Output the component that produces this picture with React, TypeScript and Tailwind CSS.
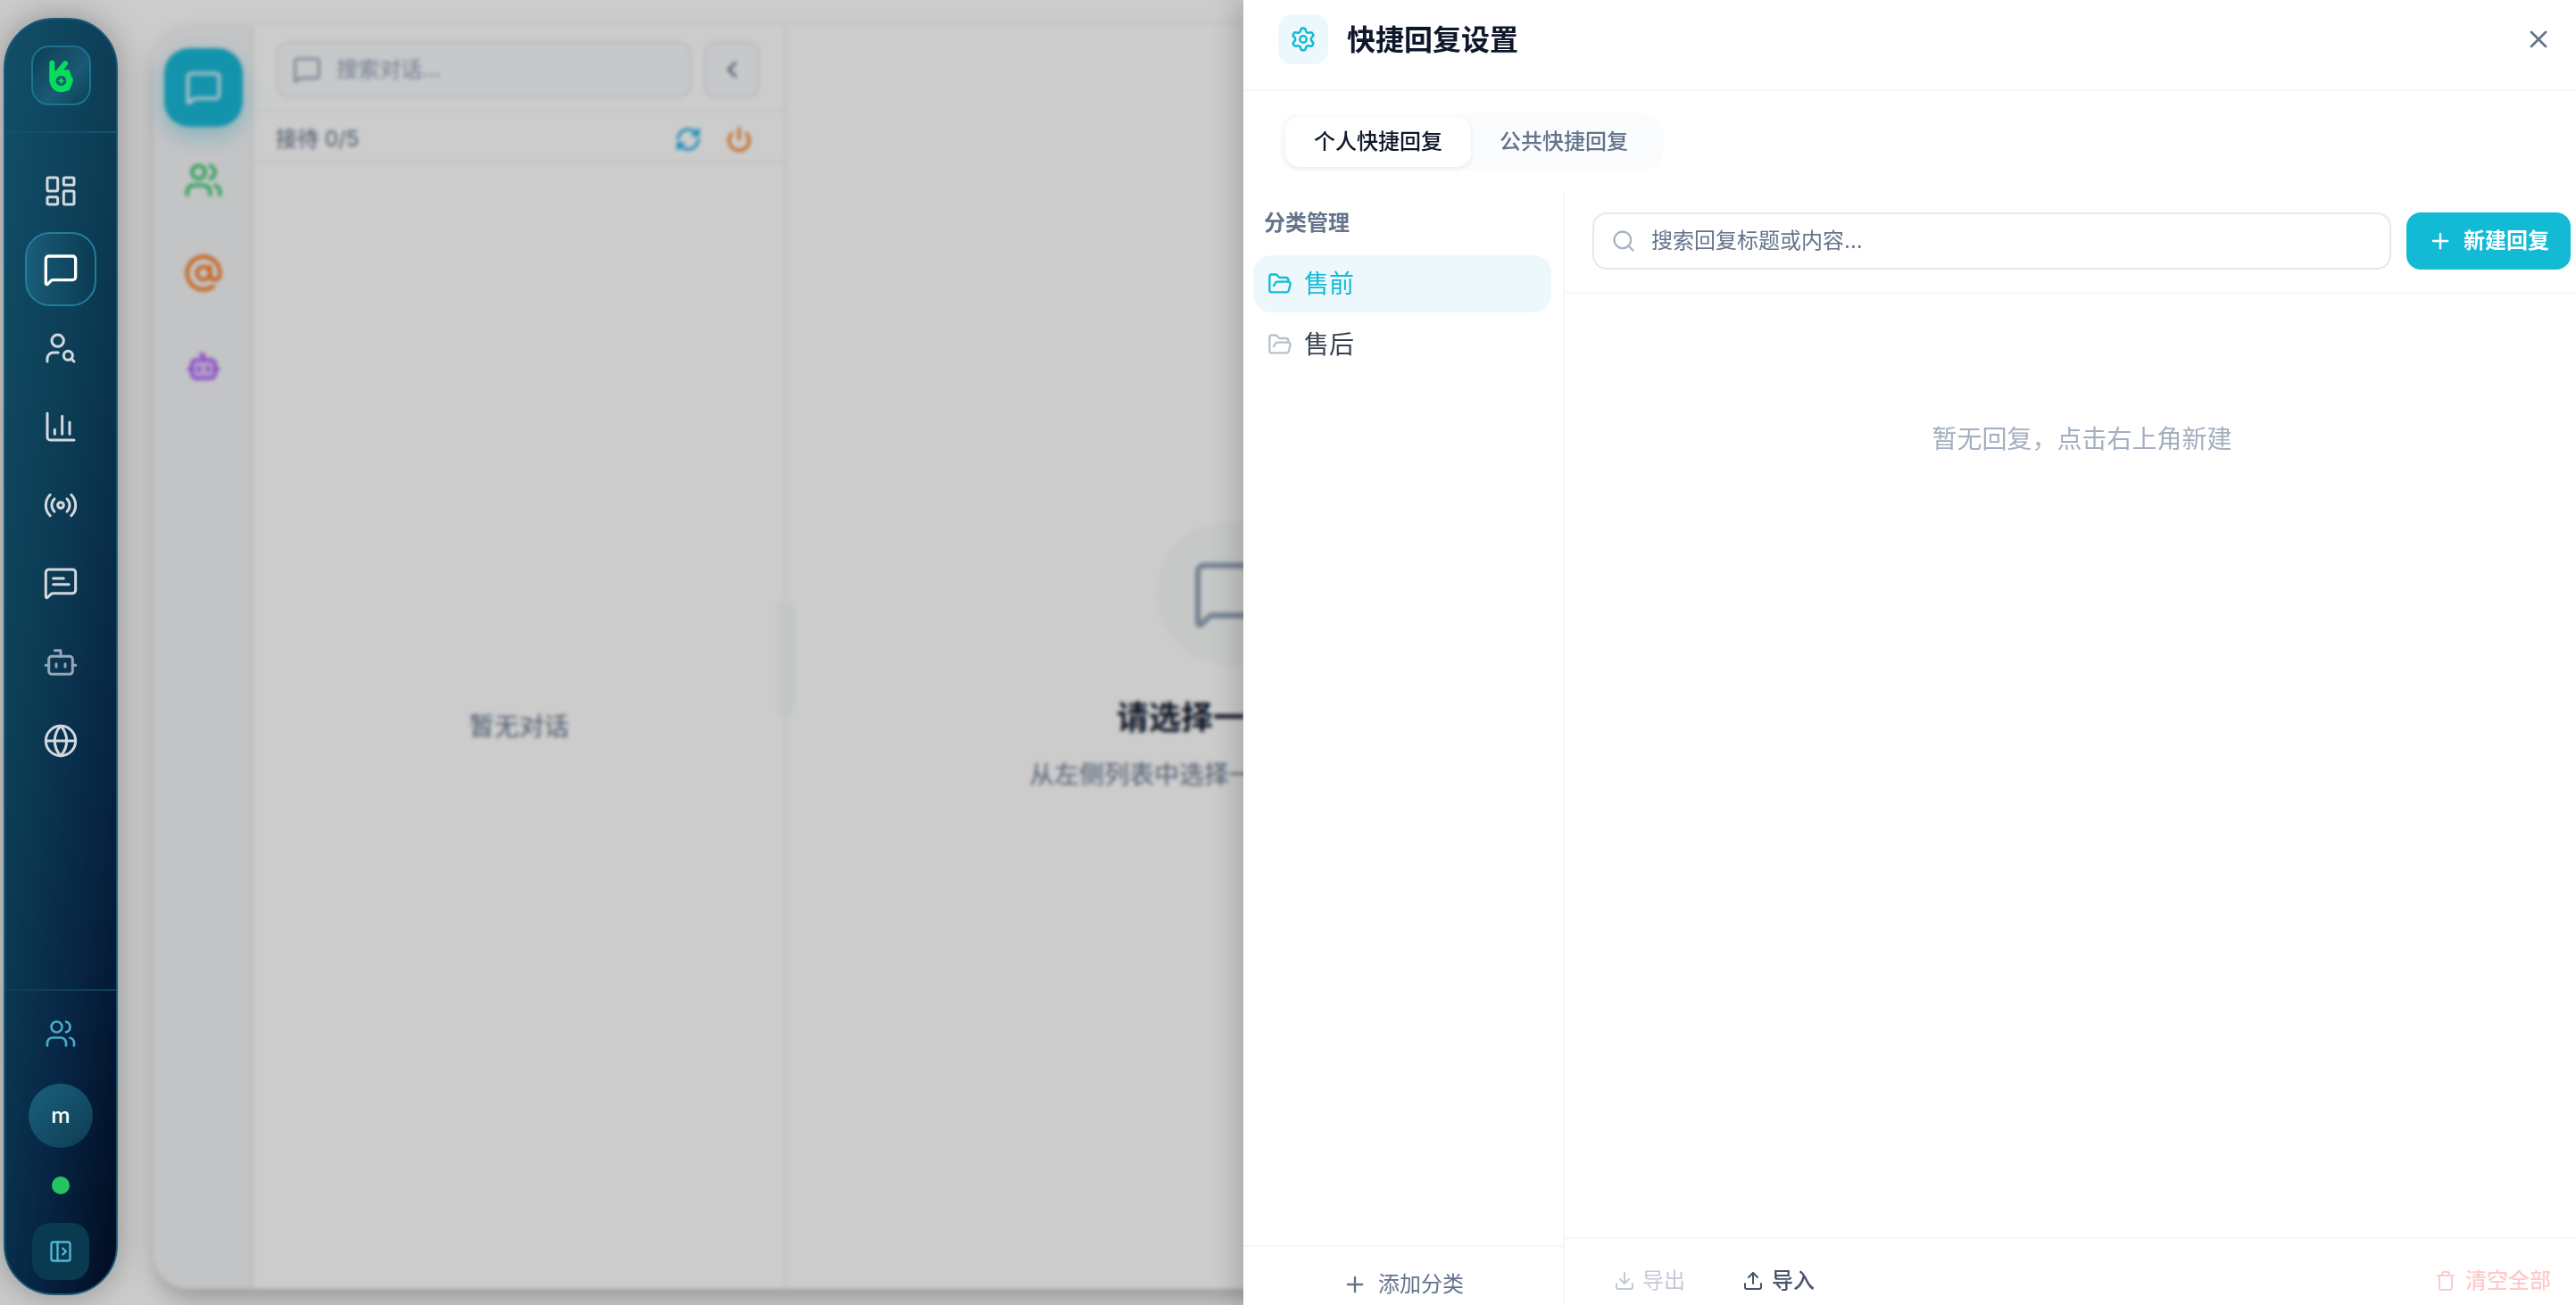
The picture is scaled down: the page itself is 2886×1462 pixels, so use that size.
import {
  AtSign,
  ChartColumn,
  ChevronLeft,
  Download,
  FolderOpen,
  Globe,
  LayoutDashboard,
  MessageSquare,
  PanelLeftOpen,
  Plus,
  Power,
  Radio,
  RefreshCw,
  Search,
  Settings,
  Trash,
  Upload,
  UserSearch,
  Users,
  X,
  Bot,
} from 'lucide-react';

function Logo() {
  return (
    <svg width="67" height="67" viewBox="4 2.5 68 68" fill="none">
      <circle cx="38" cy="43" r="10" stroke="#05dd5b" strokeWidth="7.5" />
      <path d="M27 21.5V43" stroke="#05dd5b" strokeWidth="6.5" strokeLinecap="round" />
      <path d="M43 22L34 33" stroke="#05dd5b" strokeWidth="6.5" strokeLinecap="round" />
      <circle cx="45" cy="33.5" r="4" fill="#05dd5b" />
      <circle cx="48.5" cy="42.5" r="4" fill="#05dd5b" />
      <circle cx="45" cy="51" r="4" fill="#05dd5b" />
      <path
        d="M38 38Q38.7 42.3 43 43Q38.7 43.7 38 48Q37.3 43.7 33 43Q37.3 42.3 38 38Z"
        fill="#05dd5b"
      />
    </svg>
  );
}

function ChatLines() {
  return (
    <svg
      width="40"
      height="40"
      viewBox="0 0 24 24"
      fill="none"
      stroke="currentColor"
      strokeWidth="1.8"
      strokeLinecap="round"
      strokeLinejoin="round"
      className="-mt-[2px]"
    >
      <path d="M22 17a2 2 0 0 1-2 2H6.828a2 2 0 0 0-1.414.586l-2.202 2.202A.71.71 0 0 1 2 21.286V5a2 2 0 0 1 2-2h16a2 2 0 0 1 2 2z" />
      <path d="M7 9h7" />
      <path d="M7 13h10.5" />
    </svg>
  );
}

function PurpleBot() {
  return (
    <svg width="42" height="42" viewBox="0 0 24 24" fill="none" strokeLinecap="round" strokeLinejoin="round">
      <path d="M12 8V4.5H10" stroke="#a855f7" strokeWidth="2" />
      <rect x="4.5" y="8" width="15" height="12" rx="3" fill="#ddc4fb" stroke="#a855f7" strokeWidth="2" />
      <path d="M2.5 14h2M19.5 14h2" stroke="#a855f7" strokeWidth="2" />
      <path d="M9 13v2M15 13v2" stroke="#a855f7" strokeWidth="2" />
    </svg>
  );
}

function Sidebar() {
  return (
    <aside className="relative z-20 ml-1 mt-5 flex h-[1431px] w-[128px] shrink-0 flex-col rounded-[56px] border-2 border-[#1b5b78] bg-[linear-gradient(98deg,#124f69_0%,#0c3d55_40%,#072645_70%,#010b20_100%)] shadow-[0_0_36px_rgba(0,0,0,0.3)]">
      <div className="flex h-[127px] shrink-0 items-center justify-center border-b-2 border-[#14506a]">
        <div className="flex h-[67px] w-[67px] items-center justify-center rounded-[20px] border-2 border-[#1d7390] bg-[linear-gradient(135deg,#0c3f57,#1a5a74_60%,#0d3f58)]">
          <Logo />
        </div>
      </div>
      <nav className="flex flex-col items-center gap-[5px] pt-[23px] text-[#d3d8e0]">
        <NavItem>
          <LayoutDashboard size={40} strokeWidth={1.8} />
        </NavItem>
        <div className="flex h-[83px] w-[80px] items-center justify-center rounded-[28px] border-2 border-[#1f7f9d] bg-[linear-gradient(90deg,#1a5d78,#0b3a52)] text-white">
          <MessageSquare size={40} strokeWidth={2} />
        </div>
        <NavItem>
          <UserSearch size={40} strokeWidth={1.8} />
        </NavItem>
        <NavItem>
          <ChartColumn size={40} strokeWidth={1.8} />
        </NavItem>
        <NavItem>
          <Radio size={40} strokeWidth={1.8} />
        </NavItem>
        <NavItem>
          <ChatLines />
        </NavItem>
        <NavItem>
          <Bot size={40} strokeWidth={1.8} className="text-[#98a5b8]" />
        </NavItem>
        <NavItem>
          <Globe size={40} strokeWidth={1.8} />
        </NavItem>
      </nav>
      <div className="mt-auto flex flex-col items-center border-t-2 border-[#0f3f58] pb-[15px] pt-[30px]">
        <Users size={36} strokeWidth={1.8} className="text-[#4aa8c2]" />
        <div className="mt-[38px] flex h-[72px] w-[72px] items-center justify-center rounded-full bg-[linear-gradient(135deg,#1a617e,#0d3c52)] text-[24px] font-medium text-white">
          m
        </div>
        <div className="mt-[32px] h-5 w-5 rounded-full bg-[#22c55e]" />
        <div className="mt-[32px] flex h-16 w-16 items-center justify-center rounded-[20px] bg-[#0a3a50]">
          <PanelLeftOpen size={28} strokeWidth={2} className="text-[#4fb9d6]" />
        </div>
      </div>
    </aside>
  );
}

function NavItem({ children }: { children: React.ReactNode }) {
  return <div className="flex h-[83px] w-[80px] items-center justify-center">{children}</div>;
}

function ChatPanel() {
  return (
    <div className="ml-10 mt-7 flex h-[1416px] w-[1701px] shrink-0 rounded-[40px] bg-white shadow-[0_14px_30px_-6px_rgba(0,0,0,0.3)]">
      <div className="flex w-[112px] shrink-0 flex-col items-center gap-4 rounded-l-[40px] border-r-2 border-[#e9ebee] bg-[#f4f5f7] pl-[2px] pt-[26px]">
        <div className="flex h-[88px] w-[88px] items-center justify-center rounded-[28px] bg-[#19b9d7] text-white shadow-[0_10px_24px_rgba(25,185,215,0.35)]">
          <MessageSquare size={42} strokeWidth={1.8} />
        </div>
        <div className="flex h-[88px] items-center text-[#22c55e]">
          <Users size={44} strokeWidth={2} />
        </div>
        <div className="flex h-[88px] items-center text-[#f97316]">
          <AtSign size={44} strokeWidth={2.2} />
        </div>
        <div className="flex h-[88px] items-center">
          <PurpleBot />
        </div>
      </div>

      <div className="relative flex w-[597px] shrink-0 flex-col border-r-2 border-[#eceef1]">
        <div className="flex h-[97px] items-start gap-[13px] border-b-2 border-[#f1f3f5] pl-[25px] pt-[18px]">
          <div className="flex h-16 w-[466px] items-center gap-[17px] rounded-[16px] border-2 border-[#e8ebef] bg-[#f8fafc] pl-[17px] text-[24px] text-[#94a3b8]">
            <MessageSquare size={32} strokeWidth={2} />
            搜索对话...
          </div>
          <div className="flex h-16 w-16 items-center justify-center rounded-[16px] border-2 border-[#e8ebef] bg-[#f8fafc] text-[#64748b]">
            <ChevronLeft size={30} strokeWidth={2.4} />
          </div>
        </div>
        <div className="flex h-[58px] items-center border-b-2 border-[#f1f3f5] pl-[25px] pr-[36px] pt-[6px] text-[24px] text-[#64748b]">
          接待 0/5
          <RefreshCw size={30} strokeWidth={2.2} className="ml-auto text-[#0ea5e9]" />
          <Power size={30} strokeWidth={2.4} className="ml-[27px] text-[#f97316]" />
        </div>
        <div className="flex flex-1 items-center justify-center text-[28px] text-[#64748b]">暂无对话</div>
        <div className="absolute right-[-11px] top-[644px] h-[131px] w-[20px] rounded-full bg-[#f5f9fa]" />
      </div>

      <div className="flex flex-1 flex-col items-center justify-center">
        <div className="flex h-[162px] w-[162px] items-center justify-center rounded-full bg-[#f8fafb] text-[#94a3b8]">
          <MessageSquare size={84} strokeWidth={1.8} />
        </div>
        <div className="mt-[30px] text-[36px] font-bold leading-[56px] text-[#0f172a]">请选择一个对话</div>
        <div className="mt-4 text-[28px] leading-[40px] text-[#64748b]">从左侧列表中选择一个对话开始聊天</div>
      </div>
    </div>
  );
}

function Drawer() {
  return (
    <section className="absolute right-0 top-0 z-30 flex h-full w-[1493px] flex-col overflow-hidden bg-white shadow-[-8px_0_28px_rgba(0,0,0,0.18)]">
      <header className="flex h-[102px] shrink-0 items-center border-b-2 border-[#f6f7f8] pb-[12px] pl-[39px] pr-[26px]">
        <div className="flex h-14 w-14 items-center justify-center rounded-[16px] bg-[#ecf8fb] text-[#12bad6]">
          <Settings size={30} strokeWidth={2} />
        </div>
        <h1 className="ml-[21px] pt-[2px] text-[32px] font-bold text-[#0f172a]">快捷回复设置</h1>
        <X size={32} strokeWidth={2} className="ml-auto text-[#64748b]" />
      </header>

      <div className="h-[113px] shrink-0 pl-[40px] pt-[25px]">
        <div className="flex h-[63px] w-[430px] items-center rounded-[20px] bg-[#fbfcfd] px-[7px] text-[24px] font-medium">
          <div className="flex h-14 w-[208px] items-center justify-center rounded-[16px] bg-white text-[#0f172a] shadow-[0_2px_6px_rgba(15,23,42,0.08)]">
            个人快捷回复
          </div>
          <div className="flex h-14 w-[208px] items-center justify-center text-[#64748b]">公共快捷回复</div>
        </div>
      </div>

      <div className="flex min-h-0 w-[1519px] flex-1">
        <div className="flex w-[360px] shrink-0 flex-col border-r-2 border-[#f6f7f8]">
          <div className="pl-[23px] pt-[17px] text-[24px] font-semibold leading-[36px] text-[#64748b]">分类管理</div>
          <div className="mt-[18px] flex flex-col gap-1 pl-[11px]">
            <div className="flex h-16 w-[334px] items-center gap-[13px] rounded-[20px] bg-[#ecf8fb] pl-[16px] text-[28px] text-[#12bad6]">
              <FolderOpen size={28} strokeWidth={2} />
              售前
            </div>
            <div className="flex h-16 w-[334px] items-center gap-[13px] rounded-[20px] pl-[16px] text-[28px] text-[#374151]">
              <FolderOpen size={28} strokeWidth={2} className="text-[#b8c2cf]" />
              售后
            </div>
          </div>
          <div className="mt-auto flex h-[67px] shrink-0 items-start justify-center gap-3 border-t-2 border-[#f6f7f8] pt-[24px] text-[24px] leading-[36px] text-[#64748b]">
            <Plus size={28} strokeWidth={2} className="mt-1" />
            添加分类
          </div>
        </div>

        <div className="flex w-[1159px] shrink-0 flex-col">
          <div className="flex h-[114px] shrink-0 items-start gap-[17px] border-b-2 border-[#f6f7f8] pl-[31px] pr-[32px] pt-[23px]">
            <div className="flex h-16 min-w-0 flex-1 items-center gap-[17px] rounded-[16px] border-2 border-[#e2e8f0] pl-[19px] text-[24px] text-[#64748b]">
              <Search size={28} strokeWidth={2} className="text-[#a8b3c2]" />
              搜索回复标题或内容...
            </div>
            <button
              type="button"
              className="flex h-16 w-[184px] shrink-0 items-center gap-3 rounded-[16px] bg-[#12bad6] px-6 text-[24px] font-semibold text-white"
            >
              <Plus size={28} strokeWidth={2} />
              新建回复
            </button>
          </div>
          <div className="flex-1 pt-[143px] text-center text-[28px] leading-[40px] text-[#a3afbf]">
            暂无回复，点击右上角新建
          </div>
          <div className="flex h-[76px] shrink-0 items-start border-t-2 border-[#f6f7f8] pl-[55px] pr-[54px] pt-[29px] text-[24px] leading-[36px]">
            <div className="flex items-center gap-[8px] text-[#c3cad5]">
              <Download size={24} strokeWidth={2} />
              导出
            </div>
            <div className="ml-16 flex items-center gap-[9px] font-medium text-[#475569]">
              <Upload size={24} strokeWidth={2} />
              导入
            </div>
            <div className="ml-auto flex items-center gap-[10px] font-medium text-[#fecaca]">
              <Trash size={24} strokeWidth={2} />
              清空全部
            </div>
          </div>
        </div>
      </div>
    </section>
  );
}

export default function App() {
  return (
    <div className="relative flex h-[1462px] w-[2886px] items-start overflow-hidden bg-white font-['Inter','Noto_Sans_CJK_SC',sans-serif]">
      <Sidebar />
      <ChatPanel />
      <div className="absolute inset-0 z-10 bg-black/20 backdrop-blur-[2px]" />
      <Drawer />
    </div>
  );
}
